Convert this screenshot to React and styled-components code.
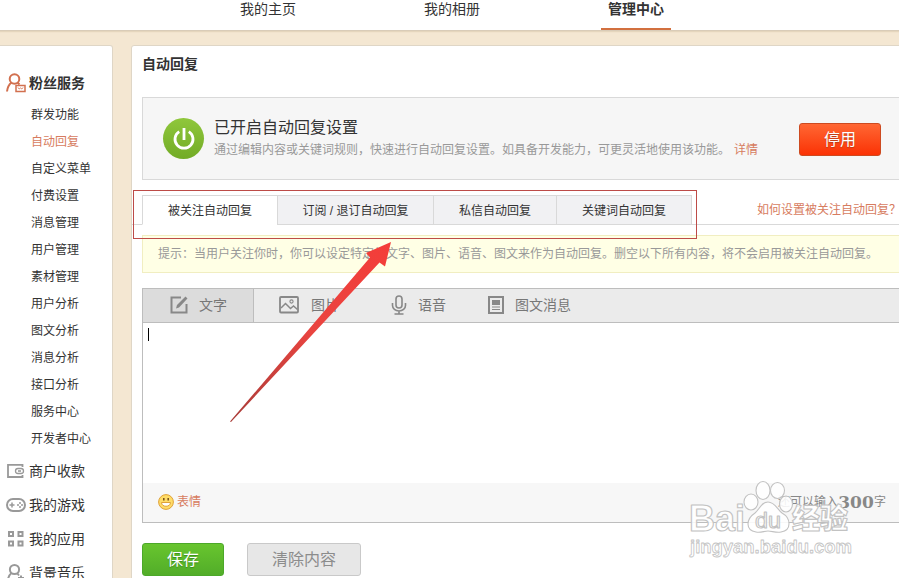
import React from 'react';
import styled, { createGlobalStyle, css } from 'styled-components';

const GlobalStyle = createGlobalStyle`
  * {
    box-sizing: border-box;
  }

  body {
    margin: 0;
    background: #f4e7d2;
    color: #333;
    font: 12px/18px 'Liberation Sans', 'Noto Sans CJK SC', sans-serif;
    overflow: hidden;
  }
`;

const Page = styled.div`
  position: relative;
  height: 578px;
  overflow: hidden;
`;

const Header = styled.nav`
  display: flex;
  height: 31px;
  padding-left: 233px;
  gap: 114px;
  background: #fff;
  border-bottom: 1px solid #d9ccb8;
  box-shadow: 0 1px 1px rgba(120, 90, 40, 0.12);
`;

const HeaderLink = styled.a`
  width: 70px;
  height: 30px;
  line-height: 18px;
  font-size: 14px;
  text-align: center;
  font-weight: ${(props) => (props.$active ? 700 : 400)};
  border-bottom: 2px solid ${(props) => (props.$active ? '#d2703f' : 'transparent')};
`;

const Body = styled.div`
  display: flex;
  align-items: flex-start;
  gap: 18px;
  margin-top: 14px;
`;

const Sidebar = styled.aside`
  flex: none;
  width: 113px;
  height: 560px;
  padding-top: 20px;
  background: #fff;
  border: 1px solid #dfd6c6;
  border-left: 0;
  border-radius: 0 3px 0 0;
`;

const Group = styled.div`
  display: flex;
  align-items: center;
  height: 34px;
  padding-left: 6px;
  gap: 3px;
  font-size: 14px;
  font-weight: ${(props) => (props.$bold ? 700 : 400)};

  svg {
    flex: none;
  }
`;

const SubList = styled.div`
  margin: 2px 0 1px;
  padding-left: 31px;
`;

const SubItem = styled.a`
  display: block;
  height: 27px;
  line-height: 27px;
  white-space: nowrap;
  color: ${(props) => (props.$active ? '#d77c60' : '#333')};
`;

const Panel = styled.main`
  flex: none;
  width: 790px;
  height: 560px;
  background: #fff;
  border: 1px solid #dfd6c6;
  border-radius: 3px 0 0 0;
`;

const PanelTitle = styled.h1`
  height: 51px;
  margin: 0;
  padding-left: 10px;
  font-size: 14px;
  line-height: 36px;
`;

const Notice = styled.section`
  display: flex;
  align-items: center;
  height: 83px;
  margin-left: 10px;
  padding-left: 20px;
  background: #f6f6f6;
  border: 1px solid #d9d9d9;
`;

const PowerBadge = styled.div`
  display: flex;
  width: 41px;
  height: 41px;
  align-items: center;
  justify-content: center;
  border-radius: 50%;
  background: linear-gradient(#8fc73c, #72ab26);
`;

const NoticeText = styled.div`
  width: 585px;
  margin-left: 10px;
  color: #999;
  white-space: nowrap;
`;

const NoticeTitle = styled.div`
  height: 25px;
  margin-top: -2px;
  font-size: 16px;
  line-height: 24px;
  color: #333;
`;

const Link = styled.a`
  color: #d77c60;
`;

const NoticeLink = styled(Link)`
  margin-left: 4px;
`;

const buttonBase = css`
  height: 33px;
  padding: 0;
  font: 16px/29px 'Liberation Sans', 'Noto Sans CJK SC', sans-serif;
  border-radius: 3px;
`;

const StopButton = styled.button`
  ${buttonBase}
  width: 82px;
  margin-top: 2px;
  color: #fff;
  border: 1px solid #cd4a20;
  background: linear-gradient(#ff6733, #fb3205);
  text-shadow: 0 1px 1px #b53a16;
`;

const TabBar = styled.div`
  display: flex;
  height: 30px;
  margin-top: 15px;
  padding-left: 10px;
  background: linear-gradient(#d9d9d9, #d9d9d9) bottom / 100% 1px no-repeat;
`;

const Tab = styled.a`
  width: ${(props) => props.$width}px;
  border: 1px solid #d9d9d9;
  border-right-width: ${(props) => (props.$last ? '1px' : 0)};
  border-bottom-color: ${(props) => (props.$active ? '#fff' : '#d9d9d9')};
  background: ${(props) => (props.$active ? '#fff' : '#f1f1f3')};
  line-height: 30px;
  text-align: center;
  white-space: pre;
`;

const TabHelp = styled(Link)`
  margin-left: 65px;
  line-height: 31px;
  white-space: nowrap;
`;

const Tip = styled.div`
  height: 38px;
  margin: 10px 0 0 10px;
  padding-left: 15px;
  border: 1px solid #f1eec1;
  background: #ffffe5;
  color: #999;
  line-height: 36px;
  white-space: nowrap;
`;

const Editor = styled.section`
  height: 235px;
  margin: 15px 0 0 10px;
  border: 1px solid #bdbdbd;
`;

const Toolbar = styled.div`
  display: flex;
  height: 34px;
  background: #ebebeb;
  border-bottom: 1px solid #bdbdbd;
`;

const Tool = styled.a`
  display: flex;
  width: ${(props) => props.$width}px;
  align-items: center;
  gap: ${(props) => props.$gap || 10}px;
  padding: 0 0 2px ${(props) => props.$left}px;
  color: #777;
  font-size: 14px;
  white-space: nowrap;
  background: ${(props) => (props.$active ? '#dcdcdc' : 'none')};
  border-right: 1px solid ${(props) => (props.$active ? '#bdbdbd' : 'transparent')};

  svg {
    flex: none;
  }
`;

const TextArea = styled.div`
  height: 160px;
  padding: 5px;
`;

const Caret = styled.div`
  width: 1px;
  height: 13px;
  background: #000;
`;

const EditorFooter = styled.div`
  display: flex;
  align-items: center;
  justify-content: space-between;
  height: 39px;
  padding: 0 33px 1px 15px;
  background: #f7f7f7;
`;

const Emotion = styled(Link)`
  display: flex;
  align-items: center;
  gap: 3px;
`;

const Counter = styled.div`
  display: flex;
  align-items: center;
  color: #888;
`;

const CounterValue = styled.strong`
  width: 36px;
  font: bold 17px/18px 'DejaVu Serif', serif;
  text-align: center;
`;

const Actions = styled.div`
  display: flex;
  gap: 23px;
  margin: 20px 0 0 10px;
`;

const SaveButton = styled.button`
  ${buttonBase}
  width: 82px;
  color: #fff;
  border: 1px solid #4ca829;
  background: linear-gradient(#68c52e, #52ad29);
  text-shadow: 0 1px 1px #3b8a1d;
`;

const ClearButton = styled.button`
  ${buttonBase}
  width: 114px;
  color: #8c8c8c;
  border: 1px solid #c9c9c9;
  background: #e7e7e7;
`;

const Highlight = styled.div`
  position: absolute;
  left: 133px;
  top: 190px;
  width: 564px;
  height: 49px;
  border: 1px solid #bd4b47;
`;

const Arrow = styled.svg`
  position: absolute;
  left: 225px;
  top: 235px;
`;

const Watermark = styled.svg`
  position: absolute;
  left: 680px;
  top: 475px;
`;

function Icon({ width = 20, height = 20, color = '#999', stroke = 2, children }) {
  return (
    <svg
      width={width}
      height={height}
      viewBox={`0 0 ${width} ${height}`}
      fill="none"
      stroke={color}
      strokeWidth={stroke}
    >
      {children}
    </svg>
  );
}

const FansIcon = () => (
  <Icon color="#d2704f">
    <circle cx="8.5" cy="6" r="4.8" />
    <path d="M5.5 9.5C3 11.5 1.5 14 1 18.5M11.5 9.5l2 2" />
    <path d="M10 12.5h9v6h-9z" strokeWidth="1.5" />
    <path d="M12 14.5l1.2 1.5 1.3-1 1.3 1 1.2-1.5" strokeWidth="0.9" />
  </Icon>
);

const WalletIcon = () => (
  <Icon>
    <path d="M16.5 6V3.8H2V16h14.5v-2" strokeWidth="1.8" />
    <rect x="9.5" y="7.5" width="8" height="5" rx="2.5" strokeWidth="1.3" />
    <path d="M12 10h3" strokeWidth="1.6" />
  </Icon>
);

const GameIcon = () => (
  <Icon>
    <rect x="1" y="4" width="18" height="12" rx="6" />
    <path d="M3.5 10h5M6 7.5v5" strokeWidth="1.5" />
    <g fill="#999" stroke="none">
      <circle cx="14" cy="8" r="1" />
      <circle cx="14" cy="12" r="1" />
      <circle cx="12" cy="10" r="1" />
      <circle cx="16" cy="10" r="1" />
    </g>
  </Icon>
);

const AppsIcon = () => (
  <Icon>
    <path d="M3 3h4v4H3zM12.5 3h4v4h-4zM3 12.5h4v4H3zM12.5 12.5h4v4h-4z" />
  </Icon>
);

const MusicIcon = () => (
  <Icon>
    <circle cx="8.5" cy="6.5" r="4.6" />
    <path d="M5.5 10C3 12 2 14 1.5 19M11 10l2 2.5M12 15h6M15 12.5v6" />
  </Icon>
);

const PowerIcon = () => (
  <Icon width={24} height={24} color="#fff" stroke={2.8}>
    <path d="M7.2 4.6a9 9 0 1 0 9.6 0M12 1v12" />
  </Icon>
);

const EditIcon = () => (
  <Icon color="#888">
    <path d="M12 2.5H2.5v15h15V9" />
    <path d="M7 13.5l1-3.5 8.500-8.500 2 2L10 12.500z" fill="#888" stroke="none" />
  </Icon>
);

const PictureIcon = () => (
  <Icon width={20} height={18} color="#888" stroke={1.8}>
    <rect x="1" y="1" width="18" height="15.5" rx="1" />
    <path d="M2 12l4.5-4.500 5 5 3-2.500 4 3.500" strokeWidth="1.5" />
    <circle cx="12.5" cy="5.5" r="1.6" strokeWidth="1.1" />
  </Icon>
);

const MicIcon = () => (
  <Icon width={16} height={20} color="#888" stroke={1.6}>
    <rect x="5" y="1" width="6" height="12" rx="3" />
    <path d="M1.5 8v2.5a6.5 5.5 0 0 0 13 0V8M8 16v3M3.5 19h9" />
  </Icon>
);

const ArticleIcon = () => (
  <Icon width={16} height={18} color="#888">
    <path d="M1 1h14v16H1z" />
    <path d="M4 4h8v5H4z" fill="#888" stroke="none" />
    <path d="M4 11h8M4 13.5h8" strokeWidth="1" />
  </Icon>
);

const SmileIcon = () => (
  <Icon width={16} height={16} color="#dfa239" stroke={1}>
    <circle cx="8" cy="8" r="7.4" fill="#ffdc66" />
    <path d="M3.5 8.5h9c0 5-9 5-9 0z" fill="#fff" />
    <path d="M5.8 4v2.5M10.2 4v2.5" stroke="#77501b" strokeWidth="1.5" />
  </Icon>
);

const subItems = [
  '群发功能',
  '自动回复',
  '自定义菜单',
  '付费设置',
  '消息管理',
  '用户管理',
  '素材管理',
  '用户分析',
  '图文分析',
  '消息分析',
  '接口分析',
  '服务中心',
  '开发者中心'
];

const groups = [
  { name: '商户收款', icon: WalletIcon },
  { name: '我的游戏', icon: GameIcon },
  { name: '我的应用', icon: AppsIcon },
  { name: '背景音乐', icon: MusicIcon }
];

const tabs = [
  { name: '被关注自动回复', width: 135 },
  { name: '订阅 / 退订自动回复', width: 156 },
  { name: '私信自动回复', width: 123 },
  { name: '关键词自动回复', width: 136 }
];

const tools = [
  { name: '文字', icon: EditIcon, width: 111, left: 26 },
  { name: '图片', icon: PictureIcon, width: 112, left: 25, gap: 12 },
  { name: '语音', icon: MicIcon, width: 97, left: 25, gap: 11 },
  { name: '图文消息', icon: ArticleIcon, width: 130, left: 25, gap: 11 }
];

function BaiduWatermark() {
  return (
    <Watermark
      width="185"
      height="90"
      fill="#fff"
      fillOpacity="0.88"
      stroke="#c2c2c2"
      strokeWidth="1.1"
      strokeLinejoin="round"
      fontFamily="'Liberation Sans', sans-serif"
    >
      <text x="9" y="56" fontSize="36" fontWeight="700" textLength="56" lengthAdjust="spacingAndGlyphs">
        Bai
      </text>
      <ellipse cx="71" cy="27" rx="7" ry="8" />
      <ellipse cx="83" cy="15.5" rx="7" ry="9" />
      <ellipse cx="97.5" cy="15.5" rx="7" ry="8" />
      <ellipse cx="106" cy="29" rx="6.5" ry="8" />
      <path d="M88 27c-7 0-8 7-13 11-9 6-10 17 1 19 5 1 8-1 12-1s8 2 13 1c11-2 10-14 1-19-5-4-7-11-14-11z" />
      <text x="75" y="53" fontSize="22" textLength="26" lengthAdjust="spacingAndGlyphs">
        du
      </text>
      <text
        x="10"
        y="78"
        fontSize="19"
        fontWeight="700"
        strokeWidth="0.8"
        textLength="162"
        lengthAdjust="spacingAndGlyphs"
      >
        jingyan.baidu.com
      </text>
      <text x="112" y="54" fontFamily="'Noto Sans CJK SC', sans-serif" fontWeight="900" fontSize="28">
        经验
      </text>
    </Watermark>
  );
}

function App() {
  return (
    <Page>
      <GlobalStyle />
      <Header>
        <HeaderLink>我的主页</HeaderLink>
        <HeaderLink>我的相册</HeaderLink>
        <HeaderLink $active>管理中心</HeaderLink>
      </Header>
      <Body>
        <Sidebar>
          <Group $bold>
            <FansIcon />
            粉丝服务
          </Group>
          <SubList>
            {subItems.map((name) => (
              <SubItem key={name} $active={name === '自动回复'}>
                {name}
              </SubItem>
            ))}
          </SubList>
          {groups.map(({ name, icon: GroupIcon }) => (
            <Group key={name}>
              <GroupIcon />
              {name}
            </Group>
          ))}
        </Sidebar>
        <Panel>
          <PanelTitle>自动回复</PanelTitle>
          <Notice>
            <PowerBadge>
              <PowerIcon />
            </PowerBadge>
            <NoticeText>
              <NoticeTitle>已开启自动回复设置</NoticeTitle>
              通过编辑内容或关键词规则，快速进行自动回复设置。如具备开发能力，可更灵活地使用该功能。
              <NoticeLink>详情</NoticeLink>
            </NoticeText>
            <StopButton>停用</StopButton>
          </Notice>
          <TabBar>
            {tabs.map((tab, index) => (
              <Tab
                key={tab.name}
                $width={tab.width}
                $active={index === 0}
                $last={index === tabs.length - 1}
              >
                {tab.name}
              </Tab>
            ))}
            <TabHelp>如何设置被关注自动回复？</TabHelp>
          </TabBar>
          <Tip>
            提示：当用户关注你时，你可以设定特定的文字、图片、语音、图文来作为自动回复。删空以下所有内容，将不会启用被关注自动回复。
          </Tip>
          <Editor>
            <Toolbar>
              {tools.map(({ name, icon: ToolIcon, width, left, gap }, index) => (
                <Tool key={name} $width={width} $left={left} $gap={gap} $active={index === 0}>
                  <ToolIcon />
                  {name}
                </Tool>
              ))}
            </Toolbar>
            <TextArea>
              <Caret />
            </TextArea>
            <EditorFooter>
              <Emotion>
                <SmileIcon />
                表情
              </Emotion>
              <Counter>
                还可以输入<CounterValue>300</CounterValue>字
              </Counter>
            </EditorFooter>
          </Editor>
          <Actions>
            <SaveButton>保存</SaveButton>
            <ClearButton>清除内容</ClearButton>
          </Actions>
        </Panel>
      </Body>
      <Highlight />
      <Arrow width="175" height="195">
        <defs>
          <linearGradient id="arrow" x1="0" y1="1" x2="1" y2="0">
            <stop offset="0" stopColor="#a83c38" />
            <stop offset="0.5" stopColor="#e94440" />
            <stop offset="1" stopColor="#f43d39" />
          </linearGradient>
        </defs>
        <path d="M166 7L141 18l4 4.5L5 186.500l1 .5L154.500 27.500l5.500 4z" fill="url(#arrow)" />
      </Arrow>
      <BaiduWatermark />
    </Page>
  );
}

export default App;
